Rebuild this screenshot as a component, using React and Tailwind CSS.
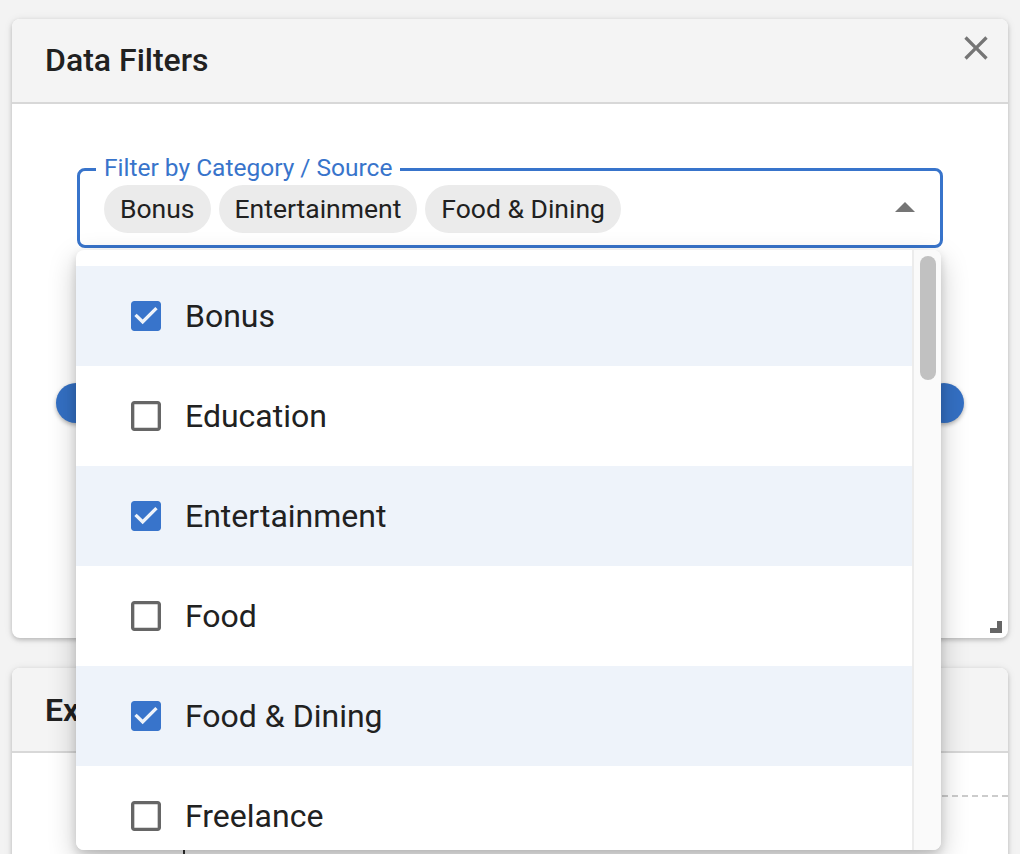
import React from "react";

const items = [
  { label: "Bonus", checked: true },
  { label: "Education", checked: false },
  { label: "Entertainment", checked: true },
  { label: "Food", checked: false },
  { label: "Food & Dining", checked: true },
  { label: "Freelance", checked: false },
  { label: "Gifts", checked: false },
];

function CheckIcon({ checked }) {
  if (checked) {
    return (
      <svg viewBox="0 0 24 24" className="w-[40px] h-[40px] shrink-0" fill="#3874cb">
        <path d="M19 3H5c-1.11 0-2 .9-2 2v14c0 1.1.89 2 2 2h14c1.11 0 2-.9 2-2V5c0-1.1-.89-2-2-2zm-9 14l-5-5 1.41-1.41L10 14.17l7.59-7.59L19 8l-9 9z" />
      </svg>
    );
  }
  return (
    <svg viewBox="0 0 24 24" className="w-[40px] h-[40px] shrink-0" fill="#666666">
      <path d="M19 5v14H5V5h14m0-2H5c-1.1 0-2 .9-2 2v14c0 1.1.9 2 2 2h14c1.1 0 2-.9 2-2V5c0-1.1-.9-2-2-2z" />
    </svg>
  );
}

function Chip({ children }) {
  return (
    <div className="h-[48px] inline-flex items-center px-[16px] rounded-full bg-[#ebebeb] text-[26.5px] text-[#212121] leading-none whitespace-nowrap">
      {children}
    </div>
  );
}

export default function App() {
  return (
    <div className="relative min-h-screen h-[854px] overflow-hidden bg-[#f3f3f3] font-['Roboto',sans-serif] px-[12px] pt-[19px]">
      {/* Card 1 */}
      <div className="relative h-[619px] rounded-[8px] bg-white shadow-[0_2px_4px_rgba(0,0,0,0.18),0_1px_8px_rgba(0,0,0,0.1)] overflow-hidden">
        <div className="relative h-[85px] bg-[#f4f4f4] border-b-2 border-[#d8d8d8] flex items-center pl-[33px]">
          <h2 className="text-[32px] font-medium text-[#212121] leading-none -mt-[1px]">Data Filters</h2>
          <svg viewBox="0 0 24 24" className="absolute right-[12px] top-[9px] w-[40px] h-[40px]" fill="#757575">
            <path d="M19 6.41 17.59 5 12 10.59 6.41 5 5 6.41 10.59 12 5 17.59 6.41 19 12 13.41 17.59 19 19 17.59 13.41 12z" />
          </svg>
        </div>
        <div className="relative h-[534px] pt-[64px] px-[65px]">
          <div className="relative h-[80px] border-[3px] border-[#3874cb] rounded-[8px] flex items-start pt-[14px] pl-[24px] gap-[8px]">
            <div className="absolute -top-[15px] left-[16px] px-[8px] bg-white text-[24.5px] leading-[24px] text-[#3874cb] whitespace-nowrap">
              Filter by Category / Source
            </div>
            <Chip>Bonus</Chip>
            <Chip>Entertainment</Chip>
            <Chip>Food &amp; Dining</Chip>
            <svg viewBox="0 0 24 24" className="absolute right-[11px] top-[13px] w-[48px] h-[48px]" fill="#757575">
              <path d="M7 14l5-5 5 5z" />
            </svg>
          </div>
          {/* slider */}
          <div className="relative -mx-[21px] mt-[135px] h-[40px] flex items-center justify-between">
            <div className="absolute left-[20px] right-[20px] top-[18px] h-[4px] bg-[#3874cb] rounded-full" />
            <div className="relative w-[40px] h-[40px] rounded-full bg-[#3470c4] shadow-[0_2px_4px_rgba(0,0,0,0.3)]" />
            <div className="relative w-[40px] h-[40px] rounded-full bg-[#3470c4] shadow-[0_2px_4px_rgba(0,0,0,0.3)]" />
          </div>
          {/* resize grip */}
          <div className="absolute right-[6px] bottom-[5px] w-[12px] h-[12px] border-r-[5px] border-b-[5px] border-[#666]" />
        </div>
      </div>

      {/* Card 2 */}
      <div className="relative mt-[30px] h-[300px] rounded-[8px] bg-white shadow-[0_2px_4px_rgba(0,0,0,0.18),0_1px_8px_rgba(0,0,0,0.1)] overflow-hidden">
        <div className="h-[85px] bg-[#f4f4f4] border-b-2 border-[#d8d8d8] flex items-center pl-[33px]">
          <h2 className="text-[32px] font-semibold text-[#212121] leading-none">Expense Breakdown</h2>
        </div>
        <div className="relative h-[215px]">
          <div className="absolute left-[120px] right-0 top-[42px] border-t-2 border-dashed border-[#cccccc]" />
          <div className="absolute left-[171px] top-[95px] w-[2px] h-[120px] bg-[#333]" />
        </div>
      </div>

      {/* Dropdown menu */}
      <div className="absolute left-[76px] top-[250px] w-[865px] h-[600px] bg-white rounded-[8px] overflow-hidden flex shadow-[0_10px_28px_rgba(0,0,0,0.22),0_4px_10px_rgba(0,0,0,0.14)]">
        <div className="flex-1 pt-[16px] overflow-hidden">
          {items.map((it) => (
            <div
              key={it.label}
              className={
                "h-[100px] flex items-center pl-[50px] " +
                (it.checked ? "bg-[#eef3fa]" : "bg-white")
              }
            >
              <CheckIcon checked={it.checked} />
              <span className="ml-[19px] text-[32px] text-[#212121] leading-none whitespace-nowrap">
                {it.label}
              </span>
            </div>
          ))}
        </div>
        <div className="w-[29px] h-full bg-[#fafafa] border-l-2 border-[#ececec] pt-[6px] pl-[6px]">
          <div className="w-[16px] h-[124px] rounded-full bg-[#c1c1c1]" />
        </div>
      </div>
    </div>
  );
}
